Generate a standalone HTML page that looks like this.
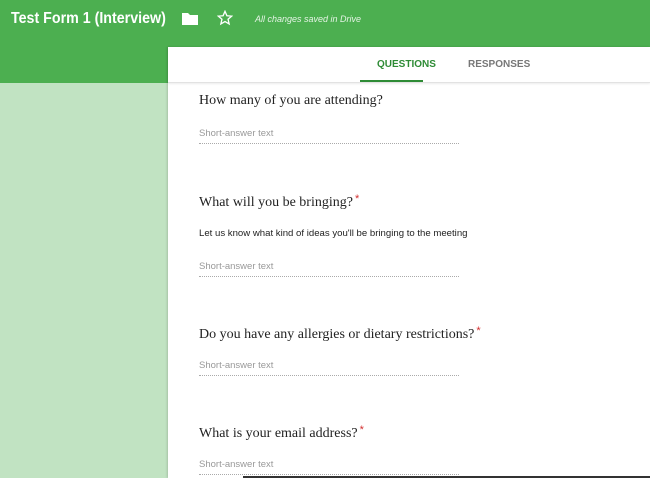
<!DOCTYPE html>
<html><head><meta charset="utf-8"><style>
*{margin:0;padding:0;box-sizing:border-box}
body{width:650px;height:478px;overflow:hidden;position:relative;background:#c1e3c2;font-family:"Liberation Sans",sans-serif}
.hdr{position:absolute;left:0;top:0;width:650px;height:83px;background:#4caf50}
.title{position:absolute;left:11px;top:10px;color:#fff;font-size:16px;font-weight:bold;transform:scaleX(0.89);transform-origin:0 0;white-space:nowrap}
.saved{position:absolute;left:255px;top:14px;color:#e4f3e4;font-size:9px;font-style:italic}
.card{position:absolute;left:168px;top:47px;width:482px;height:431px;background:#fff;box-shadow:-1px 0 2px rgba(0,0,0,.15)}
.tabs{position:absolute;left:0;top:0;width:482px;height:36px;border-bottom:1px solid #e2e2e2;box-shadow:0 1px 2px rgba(0,0,0,.08)}
.tab{position:absolute;top:12px;font-size:10px;font-weight:bold;color:#777}
.tab.a{color:#2e8b35}
.ul{position:absolute;left:192px;top:33px;width:63px;height:2px;background:#2e8b35}
.q{position:absolute;left:31px;font-family:"Liberation Serif",serif;font-size:14px;color:#222}
.q sup{color:#d32f2f;font-family:"Liberation Sans",sans-serif;font-size:11px;vertical-align:4px;margin-left:2px}
.sa{position:absolute;left:31px;width:260px;font-size:9.5px;color:#999;border-bottom:1px dotted #aaa;padding-bottom:4px}
.desc{position:absolute;left:31px;font-size:9.6px;color:#222}
.bot{position:absolute;left:243px;top:476px;width:407px;height:2px;background:#333}
</style></head><body>
<div class="hdr">
<div class="title">Test Form 1 (Interview)</div>
<svg style="position:absolute;left:182px;top:12px" width="16" height="13" viewBox="0 0 16 13"><path d="M0 1h6l2 2h8v10H0z" fill="#fff"/></svg>
<svg style="position:absolute;left:217px;top:10px" width="16" height="16" viewBox="0 0 24 24"><path d="M12 2l2.9 6.6 7.1.6-5.4 4.7 1.6 7L12 17.3 5.8 20.9l1.6-7L2 9.2l7.1-.6z" fill="none" stroke="#fff" stroke-width="2"/></svg>
<div class="saved">All changes saved in Drive</div>
</div>
<div class="card">
<div class="tabs"><span class="tab a" style="left:209px">QUESTIONS</span><span class="tab" style="left:300px">RESPONSES</span><div class="ul"></div></div>
<div class="q" style="top:46px">How many of you are attending?</div>
<div class="sa" style="top:81px">Short-answer text</div>
<div class="q" style="top:146px">What will you be bringing?<sup>*</sup></div>
<div class="desc" style="top:181px">Let us know what kind of ideas you'll be bringing to the meeting</div>
<div class="sa" style="top:214px">Short-answer text</div>
<div class="q" style="top:278px">Do you have any allergies or dietary restrictions?<sup>*</sup></div>
<div class="sa" style="top:313px">Short-answer text</div>
<div class="q" style="top:377px">What is your email address?<sup>*</sup></div>
<div class="sa" style="top:412px">Short-answer text</div>
</div>
<div class="bot"></div>
</body></html>
